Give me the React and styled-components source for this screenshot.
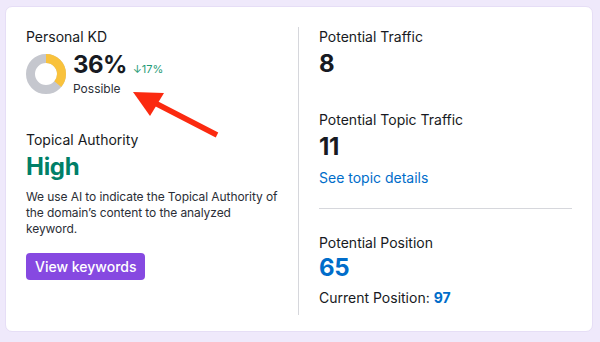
import styled, { createGlobalStyle } from "styled-components"

const Global = createGlobalStyle`
    html, body {
        margin: 0;
        padding: 0;
        background: #efe9fb;
    }
    body {
        font-family: Inter, "Noto Sans", sans-serif;
        color: #171a22;
    }
`;

const Page = styled.div`
    position: relative;
    box-sizing: border-box;
    width: 600px;
    height: 342px;
    padding: 6px 7px 10px 5px;
`;

const Card = styled.div`
    box-sizing: border-box;
    height: 100%;
    display: flex;
    padding: 20px 20px 16px 20px;
    background: #fff;
    border: 1px solid #e6def6;
    border-radius: 7px;
`;

const Column = styled.div`
    flex: 1;
    min-width: 0;
    display: flex;
    flex-direction: column;
`;

const VDivider = styled.div`
    width: 1px;
    margin: 0 20px 0 19px;
    background: #d6d7dc;
`;

const HDivider = styled.div`
    height: 1px;
    background: #d6d7dc;
    margin: 20px 0 24px;
`;

const Label = styled.div`
    font-size: 14px;
    line-height: 20px;
    color: #171a22;
    margin-top: ${p => p.$mt || 0}px;
`;

const Big = styled.div`
    font-size: 24px;
    line-height: 28px;
    font-weight: 700;
    color: ${p => p.$color || "#171a22"};
    margin-top: ${p => p.$mt ?? 3}px;
    letter-spacing: -0.3px;
`;

const KdRow = styled.div`
    display: flex;
    align-items: flex-start;
    gap: 7px;
    margin-top: 4px;
`;

const Donut = styled.svg`
    flex: none;
    margin-top: 3px;
`;

const KdText = styled.div`
    display: flex;
    flex-direction: column;
`;

const KdValue = styled.div`
    display: flex;
    align-items: baseline;
    gap: 6px;
`;

const Percent = styled.span`
    font-size: 24px;
    line-height: 28px;
    font-weight: 700;
    letter-spacing: -0.6px;
`;

const Delta = styled.span`
    font-size: 11px;
    color: #1f9b76;
`;

const Small = styled.div`
    font-size: 12px;
    line-height: 16px;
    color: #2b2e36;
    margin-top: 2px;
`;

const Desc = styled.p`
    margin: 8px 0 0;
    font-size: 12px;
    line-height: 16px;
    letter-spacing: -0.09px;
    color: #2b2e36;
`;

const Button = styled.button`
    align-self: flex-start;
    margin-top: 16px;
    height: 27px;
    padding: 0 9px;
    border: none;
    border-radius: 4px;
    background: #8649e1;
    color: #fff;
    font-family: inherit;
    font-size: 14px;
    font-weight: 500;
    cursor: pointer;
`;

const Link = styled.a`
    display: block;
    margin-top: 7px;
    font-size: 14px;
    line-height: 20px;
    color: #006dca;
    text-decoration: none;
`;

const Current = styled.div`
    font-size: 14px;
    line-height: 20px;
    margin-top: 6px;
    b {
        color: #006dca;
        font-weight: 700;
    }
`;

const Arrow = styled.svg`
    position: absolute;
    left: 125px;
    top: 85px;
    pointer-events: none;
`;

function KdDonut({ value }) {
    const r = 15.5;
    const c = 2 * Math.PI * r;
    return (
        <Donut width="40" height="40" viewBox="0 0 40 40">
            <circle cx="20" cy="20" r={r} fill="none" stroke="#c5c7ce" strokeWidth="9" />
            <circle
                cx="20" cy="20" r={r} fill="none" stroke="#f9c23c" strokeWidth="9"
                strokeDasharray={`${(c * value) / 100} ${c}`}
                transform="rotate(-90 20 20)"
            />
        </Donut>
    );
}

export default function App() {
    return (
        <Page>
            <Global />
            <Card>
                <Column>
                    <Label>Personal KD</Label>
                    <KdRow>
                        <KdDonut value={36} />
                        <KdText>
                            <KdValue>
                                <Percent>36%</Percent>
                                <Delta>↓17%</Delta>
                            </KdValue>
                            <Small>Possible</Small>
                        </KdText>
                    </KdRow>
                    <Label $mt={33}>Topical Authority</Label>
                    <Big $color="#007f68">High</Big>
                    <Desc>We use AI to indicate the Topical Authority of the domain’s content to the analyzed keyword.</Desc>
                    <Button>View keywords</Button>
                </Column>
                <VDivider />
                <Column>
                    <Label>Potential Traffic</Label>
                    <Big>8</Big>
                    <Label $mt={32}>Potential Topic Traffic</Label>
                    <Big>11</Big>
                    <Link href="#">See topic details</Link>
                    <HDivider />
                    <Label>Potential Position</Label>
                    <Big $color="#006dca" $mt={1}>65</Big>
                    <Current>Current Position: <b>97</b></Current>
                </Column>
            </Card>
            <Arrow width="100" height="56" viewBox="0 0 100 56">
                <line x1="92" y1="50" x2="30" y2="18" stroke="#fb2a10" strokeWidth="5.5" />
                <polygon points="8,7 39,8 25,31" fill="#fb2a10" />
            </Arrow>
        </Page>
    );
}
